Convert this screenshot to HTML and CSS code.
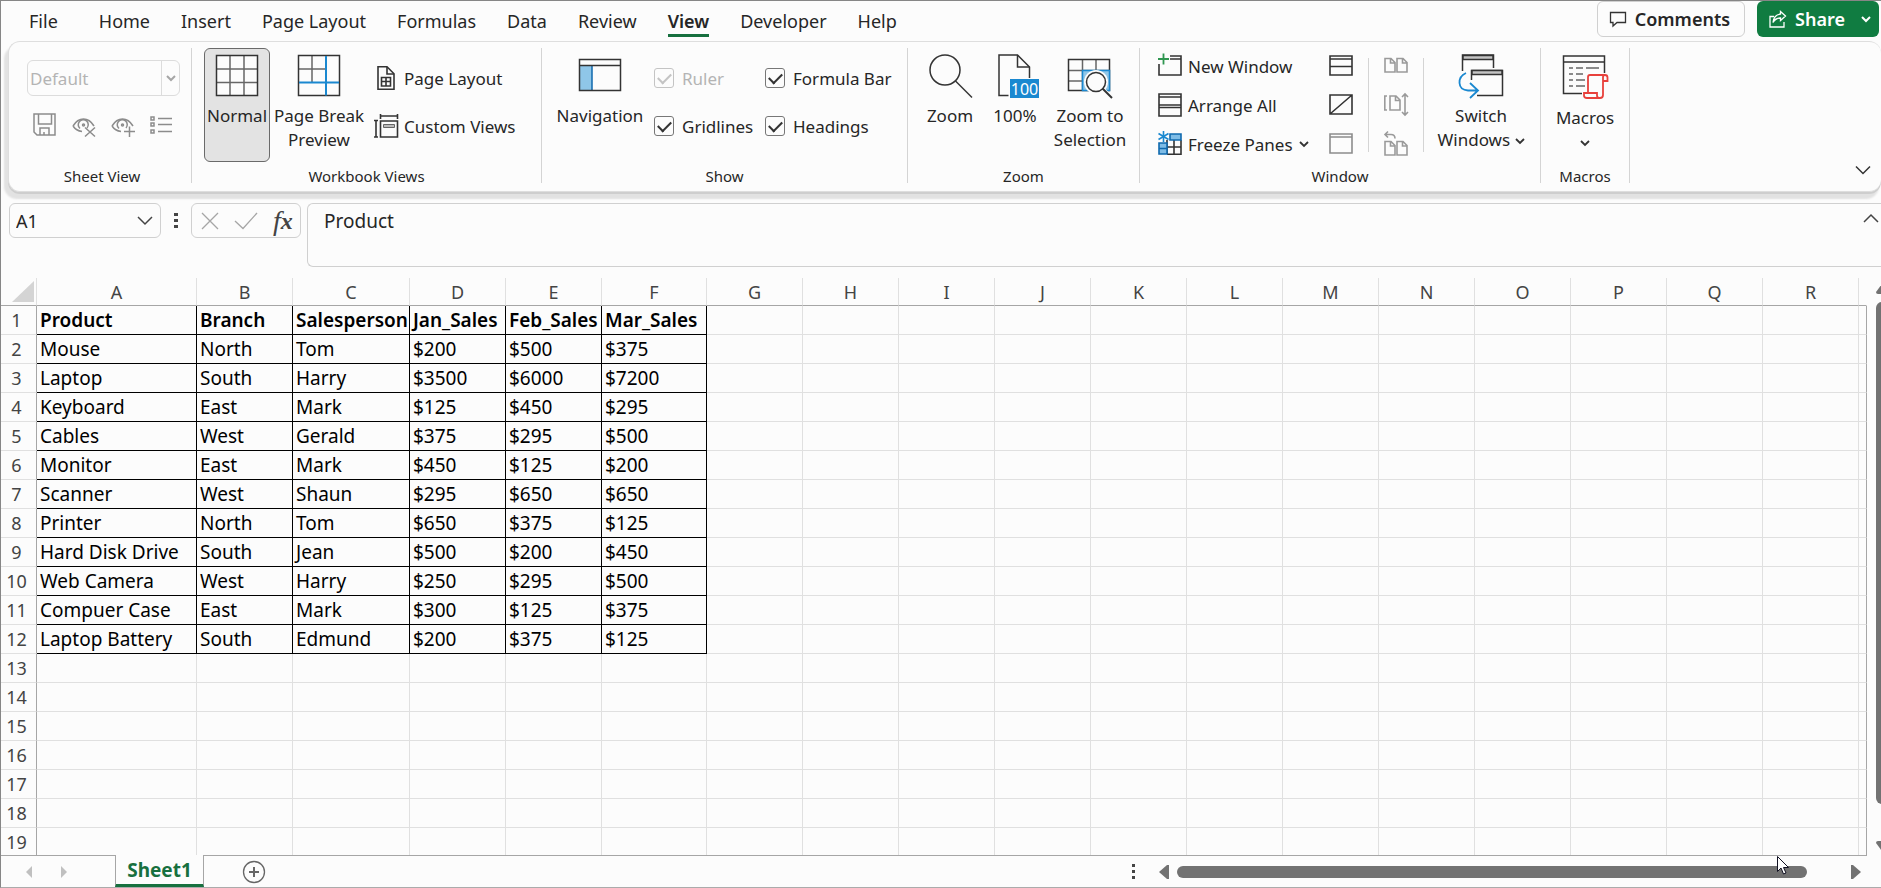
FILE: index.html
```html
<!DOCTYPE html>
<html lang="en">

<head>
    <meta charset="UTF-8">
    <meta name="viewport" content="width=device-width, initial-scale=1.0">
    <title>Sheet1</title>
    <link rel="stylesheet" href="styles.css">
</head>

<body>
    <header class="topbar">
        <nav class="tabs">
            <a href="#" class="tab file">File</a>
            <a href="#" class="tab">Home</a>
            <a href="#" class="tab">Insert</a>
            <a href="#" class="tab">Page Layout</a>
            <a href="#" class="tab">Formulas</a>
            <a href="#" class="tab">Data</a>
            <a href="#" class="tab">Review</a>
            <a href="#" class="tab active">View</a>
            <a href="#" class="tab">Developer</a>
            <a href="#" class="tab">Help</a>
        </nav>
        <div class="top-actions">
            <button class="comments">
                <svg width="18" height="18" viewBox="0 0 18 18"><path d="M1.5 2.5h15v10H8l-4 3.500v-3.500H1.500z" fill="none" stroke="#333" stroke-width="1.300"/></svg>
                Comments
            </button>
            <button class="share">
                <svg width="18" height="18" viewBox="0 0 18 18" fill="none" stroke="#fff" stroke-width="1.300"><path d="M5 6.500H1v10.500h14v-5"/><path d="M11.500 1.500l5 4.500-5 4.500V8C8 8 5.500 9.500 4 12.500 4.500 7.500 7 4.500 11.500 4z"/></svg>
                Share
                <svg class="share-arrow" width="10" height="8" viewBox="0 0 10 8"><path d="M1 2l4 4 4-4" fill="none" stroke="#fff" stroke-width="2"/></svg>
            </button>
        </div>
    </header>

    <section class="ribbon">
        <div class="group sheet-view">
            <div class="group-body stack">
                <div class="combo">
                    <select disabled aria-label="Sheet view"><option>Default</option></select>
                    <span class="combo-arrow"><svg width="10" height="8" viewBox="0 0 10 8"><path d="M1 2l4 4 4-4" fill="none" stroke="#a6a6a6" stroke-width="2"/></svg></span>
                </div>
                <div class="small-icons">
                    <button disabled aria-label="Keep"><svg width="24" height="24" viewBox="0 0 24 24" fill="none" stroke="#8c8c8c" stroke-width="1.500"><path d="M1 1h21v21H4l-3-3z"/><path d="M5.500 1v10h13V1M7 22v-7h9v7M11 19v3"/></svg></button>
                    <button disabled aria-label="Exit"><svg width="24" height="24" viewBox="0 0 24 24" fill="none" stroke="#8c8c8c" stroke-width="1.500"><path d="M1 13C4 8 8 6 11.500 6S19 8 22 13M1 13c2 3 5 5 9 5.500"/><path d="M15 15a5 5 0 1 0-7 .5"/><circle cx="11.500" cy="12" r="1"/><path d="M13 14.500l10 9M23 14.500l-10 9"/></svg></button>
                    <button disabled aria-label="New"><svg width="24" height="24" viewBox="0 0 24 24" fill="none" stroke="#8c8c8c" stroke-width="1.500"><path d="M1 13C4 8 8 6 11.500 6S19 8 22 13M1 13c2 3 5 5 9 5.500"/><path d="M15 15a5 5 0 1 0-7 .5"/><circle cx="11.500" cy="12" r="1"/><path d="M18.500 13.500v10.500M13 18.500h11"/></svg></button>
                    <button disabled aria-label="Options"><svg width="24" height="24" viewBox="0 0 24 24" fill="none" stroke="#8c8c8c" stroke-width="1.500"><path d="M1 4h3v3H1zM1 10h3v3H1zM1 17h3v3H1zM8 5.500h14M8 11.500h14M8 18.500h14"/></svg></button>
                </div>
            </div>
            <div class="group-label">Sheet View</div>
        </div>

        <div class="group workbook-views">
            <div class="group-body">
                <button class="big pressed">
                    <svg width="44" height="44" viewBox="0 0 44 44" fill="none" stroke="#666"><rect x="1.500" y="1.500" width="41" height="40" fill="#fcfcfc"/><path d="M15 1v41M29 1v41M1 15h41M1 28.500h41" stroke-width="1.500"/><rect x="1.500" y="1.500" width="41" height="40" stroke="#333" stroke-width="1.500"/></svg>
                    <span>Normal</span>
                </button>
                <button class="big page-break">
                    <svg width="44" height="44" viewBox="0 0 44 44" fill="none" stroke="#666" stroke-width="1.500"><path d="M15 1v27M1 15h27"/><rect x="1.500" y="1.500" width="41" height="40" stroke="#333"/><path d="M29 2v39.500M2 28.500h40" stroke="#1a88d0" stroke-width="2"/></svg>
                    <span>Page Break<br>Preview</span>
                </button>
                <div class="rows two">
                    <button class="row"><svg width="26" height="24" viewBox="0 0 26 24" fill="none" stroke="#333" stroke-width="1.600"><path d="M5 .8h9l7 7v15.400H5z"/><path d="M14 1v7h7"/><path d="M8.500 11.500h9v8.500h-9zM13 11.500V20M8.500 15.500h9"/></svg>Page Layout</button>
                    <button class="row"><svg width="26" height="24" viewBox="0 0 26 24" fill="none" stroke="#333" stroke-width="1.600"><path d="M7.500 2h17M7.500 0v5M24.500 0v5M3 6.500V23M1 6.500h4M1 23h4"/><path d="M7.500 7h17v16h-17z"/><path d="M10.500 10.500h11v3h-11z" fill="#bbb" stroke="#666" stroke-width="1"/></svg>Custom Views</button>
                </div>
            </div>
            <div class="group-label">Workbook Views</div>
        </div>

        <div class="group show">
            <div class="group-body">
                <button class="big">
                    <svg width="44" height="44" viewBox="0 0 44 44"><rect x="2" y="12" width="12" height="25" fill="#8fc6e8"/><path d="M14 12v25" stroke="#0f69ae" stroke-width="1.500"/><path d="M1.500 5.500h41v31h-41zM1.500 11.500h41" fill="none" stroke="#333" stroke-width="1.500"/></svg>
                    <span>Navigation</span>
                </button>
                <div class="checks">
                    <label class="check off"><input type="checkbox" checked disabled>Ruler</label>
                    <label class="check"><input type="checkbox" checked>Formula Bar</label>
                    <label class="check"><input type="checkbox" checked>Gridlines</label>
                    <label class="check"><input type="checkbox" checked>Headings</label>
                </div>
            </div>
            <div class="group-label">Show</div>
        </div>

        <div class="group zoom">
            <div class="group-body">
                <button class="big">
                    <svg width="44" height="44" viewBox="0 0 44 44" fill="none" stroke="#333" stroke-width="1.500"><circle cx="17" cy="16" r="15"/><path d="M27.500 27L44 43.500"/></svg>
                    <span>Zoom</span>
                </button>
                <button class="big">
                    <svg width="44" height="44" viewBox="0 0 44 44" fill="none" stroke="#333" stroke-width="1.500"><path d="M15.500 41.500H6V1h18.500l12 12v11"/><path d="M24.500 1v12h12"/><rect x="17" y="25" width="29" height="19" fill="#1a88d0" stroke="none"/><text x="31.500" y="40.500" class="badge-text">100</text></svg>
                    <span>100%</span>
                </button>
                <button class="big wide">
                    <svg width="46" height="44" viewBox="0 0 46 44" fill="none" stroke="#666" stroke-width="1.500"><path d="M15.500 5v32M29 5v12M1.500 16.500h41M1.500 27h14"/><path d="M1.500 5.500h41v31h-41z" stroke="#333"/><path d="M15.500 16.500h27v20h-27z" fill="#8fc6e8" stroke="#1a88d0"/><circle cx="29" cy="28" r="12" fill="#fcfcfc" stroke="none"/><path d="M34 34l11 11" stroke="#fcfcfc" stroke-width="5"/><circle cx="29" cy="28" r="9.500" stroke="#333"/><path d="M35.500 34.500L45 44" stroke="#333" stroke-width="2"/></svg>
                    <span>Zoom to<br>Selection</span>
                </button>
            </div>
            <div class="group-label">Zoom</div>
        </div>

        <div class="group window">
            <div class="group-body">
                <div class="rows three window-list">
                    <button class="row"><svg width="24" height="24" viewBox="0 0 24 24" fill="none" stroke="#333" stroke-width="1.600"><path d="M12 2h11v19H1V10M12 5h11"/><path d="M5.500-.5v11M0 5h11" stroke="#2f9650" stroke-width="1.800"/></svg>New Window</button>
                    <button class="row"><svg width="24" height="24" viewBox="0 0 24 24" fill="none" stroke="#333" stroke-width="1.600"><path d="M1 1h22v22H1zM1 4h22M1 12h22M1 14.500h22"/></svg>Arrange All</button>
                    <button class="row"><svg width="24" height="24" viewBox="0 0 24 24" fill="none" stroke="#333" stroke-width="1.600"><path d="M9 8v14M16 8v14M9 15h14M9 22.200h14V8"/><path d="M12 2h11v6H12zM1 11h8v11H1zM1 16.500h8" fill="#7ebce6" stroke="#0f69ae"/><path d="M5.500-1v11M.5 1.500l10 6M10.500 1.500l-10 6" stroke="#1a88d0" stroke-width="1.600"/></svg>Freeze Panes<svg class="caret" width="10" height="8" viewBox="0 0 10 8"><path d="M1 2l4 4 4-4" fill="none" stroke="#333" stroke-width="1.800"/></svg></button>
                </div>
                <div class="rows three">
                    <button class="row" aria-label="Split"><svg width="24" height="24" viewBox="0 0 24 24" fill="none" stroke="#333" stroke-width="1.600"><path d="M1 2h22v19H1zM1 5h22M1 12.500h22"/></svg></button>
                    <button class="row" aria-label="Hide"><svg width="24" height="24" viewBox="0 0 24 24" fill="none" stroke="#333" stroke-width="1.600"><path d="M1 2h22v19H1zM1 21L23 2"/></svg></button>
                    <button class="row" disabled aria-label="Unhide"><svg width="24" height="24" viewBox="0 0 24 24" fill="none" stroke="#8c8c8c" stroke-width="1.600"><path d="M1 2h22v19H1zM1 5h22"/></svg></button>
                </div>
                <div class="divider"></div>
                <div class="rows three">
                    <button class="row" disabled aria-label="View Side by Side"><svg width="24" height="24" viewBox="0 0 24 24" fill="none" stroke="#9a9a9a" stroke-width="1.600"><path d="M1 4.500h6l4 4V18H1zM6.500 4.500v4.500h4.500M13 4.500h6l4 4V18H13zM18.500 4.500v4.500H23"/></svg></button>
                    <button class="row" disabled aria-label="Synchronous Scrolling"><svg width="24" height="24" viewBox="0 0 24 24" fill="none" stroke="#9a9a9a" stroke-width="1.600"><path d="M3 3H.8v14H3M6 3h6l4 4v10H6zM11.500 3v4.500H16M21 1v21M18 4l3-3 3 3M18 19l3 3 3-3"/></svg></button>
                    <button class="row" disabled aria-label="Reset Window Position"><svg width="24" height="24" viewBox="0 0 24 24" fill="none" stroke="#9a9a9a" stroke-width="1.600"><path d="M1 9.500h6l4 4V23H1zM6.500 9.500V14H11M13 9.500h6l4 4V23H13zM18.500 9.500V14H23M4-.5L1 2.500l3 3M1 2.500h6c3 0 4 1.500 4 4"/></svg></button>
                </div>
                <div class="divider narrow"></div>
                <button class="big switch">
                    <svg width="46" height="44" viewBox="0 0 46 44" fill="none" stroke="#333" stroke-width="1.500"><path d="M4.500 17V1h31v13" /><path d="M5 1.500h30v4H5z" fill="#c4c4c4"/><path d="M13.500 26V16.500h31v25H19"/><path d="M14 16.500h30v4H14z" fill="#c4c4c4"/><path d="M8 19C-1 23-1 36 10 36.500h10M12 29l8 7.500-8 7.500" stroke="#1a88d0" stroke-width="1.800"/></svg>
                    <span>Switch<br>Windows <svg class="caret" width="10" height="8" viewBox="0 0 10 8"><path d="M1 2l4 4 4-4" fill="none" stroke="#333" stroke-width="1.800"/></svg></span>
                </button>
            </div>
            <div class="group-label">Window</div>
        </div>

        <div class="group macros">
            <div class="group-body">
                <button class="big">
                    <svg width="46" height="46" viewBox="0 0 46 46" fill="none" stroke="#333" stroke-width="1.500"><path d="M20 39.500H1.500V2h41v17M1.500 8h41"/><path d="M7 14h4M14 14h7M24 14h13M7 20h4M14 20h7M7 26h4M14 26h9M7 32h4M14 32h9" stroke="#666"/><path d="M26 39V23c0-1.500 1-2 2-2h15c2 0 2.500 1 2.500 2.500V27H41v14c0 2-1 3-3 3H25c-2 0-3-1-3-2.500V39h13v2.500c0 1.500 1 2.500 2.500 2.500M41 27v-4c0-1 .5-2 2-2" stroke="#e8413c" stroke-width="1.800"/></svg>
                    <span>Macros<br><svg class="caret" width="10" height="8" viewBox="0 0 10 8"><path d="M1 2l4 4 4-4" fill="none" stroke="#333" stroke-width="1.800"/></svg></span>
                </button>
            </div>
            <div class="group-label">Macros</div>
        </div>
        <button class="collapse" aria-label="Collapse ribbon"><svg width="16" height="10" viewBox="0 0 16 10"><path d="M1 1.500l7 7 7-7" fill="none" stroke="#333" stroke-width="1.500"/></svg></button>
    </section>

    <section class="formula-bar">
        <div class="name-box">
            <input type="text" value="A1" aria-label="Name box">
            <svg width="16" height="10" viewBox="0 0 16 10"><path d="M1 1l7 7 7-7" fill="none" stroke="#444" stroke-width="1.500"/></svg>
        </div>
        <svg class="dots" width="4" height="16" viewBox="0 0 4 16"><path d="M0 0h4v3H0zM0 6h4v3H0zM0 12h4v3H0z" fill="#444"/></svg>
        <div class="fx-box">
            <button aria-label="Cancel"><svg width="18" height="18" viewBox="0 0 18 18"><path d="M1 1l16 16M17 1L1 17" stroke="#a6a6a6" stroke-width="1.300"/></svg></button>
            <button aria-label="Enter"><svg width="24" height="18" viewBox="0 0 24 18"><path d="M1 9l8 7.500L23 1" fill="none" stroke="#a6a6a6" stroke-width="1.300"/></svg></button>
            <button class="fx" aria-label="Insert function"><i>f</i>x</button>
        </div>
        <div class="formula">
            <textarea aria-label="Formula">Product</textarea>
            <svg width="16" height="10" viewBox="0 0 16 10"><path d="M1 9l7-7 7 7" fill="none" stroke="#444" stroke-width="1.500"/></svg>
        </div>
    </section>

    <main class="sheet">
        <div class="sheet-view-area">
            <table id="grid">
                <colgroup>
                    <col class="c-head"><col class="c-a"><col class="c-std"><col class="c-c"><col class="c-std"><col class="c-std"><col class="c-f">
                    <col class="c-std" span="12">
                    <col>
                </colgroup>
            </table>
        </div>
        <div class="v-scroll">
            <svg width="12" height="10" viewBox="0 0 12 10"><path d="M6 0l6 8q0 2-2 2H2q-2 0-2-2z" fill="#727272"/></svg>
            <div class="v-thumb"></div>
            <svg width="12" height="10" viewBox="0 0 12 10"><path d="M6 10l6-8q0-2-2-2H2Q0 0 0 2z" fill="#727272"/></svg>
        </div>
    </main>

    <footer class="bottom">
        <div class="sheet-nav">
            <svg width="6" height="12" viewBox="0 0 6 12"><path d="M6 0v12L0 6z" fill="#c0c0c0"/></svg>
            <svg width="6" height="12" viewBox="0 0 6 12"><path d="M0 0v12l6-6z" fill="#c0c0c0"/></svg>
        </div>
        <button class="sheet-tab">Sheet1</button>
        <div class="bottom-rest">
            <button class="add" aria-label="New sheet"><svg width="24" height="24" viewBox="0 0 24 24" fill="none" stroke="#666"><circle cx="12" cy="12" r="10.500" stroke-width="1.300"/><path d="M12 7v10M7 12h10" stroke-width="2"/></svg></button>
            <div class="h-scroll">
                <svg class="grip" width="3" height="16" viewBox="0 0 3 16"><path d="M0 0h3v3H0zM0 6h3v3H0zM0 12h3v3H0z" fill="#444"/></svg>
                <svg width="10" height="14" viewBox="0 0 10 14"><path d="M0 7l8-7h2v14H8z" fill="#727272"/></svg>
                <div class="h-thumb"></div>
                <svg width="10" height="14" viewBox="0 0 10 14"><path d="M10 7L2 0H0v14h2z" fill="#727272"/></svg>
            </div>
        </div>
    </footer>

    <svg class="pointer" width="12" height="19" viewBox="0 0 12 19"><path d="M.5.5v15l3.500-3.500 2.500 6 2.500-1-2.500-5.500h5z" fill="#fff" stroke="#112"/></svg>

    <script src="script.js"></script>
</body>

</html>
```
FILE: styles.css
```css
* {
    box-sizing: border-box;
}

body {
    font-family: "Noto Sans", "Open Sans", sans-serif;
    margin: 0;
    height: 100vh;
    display: flex;
    flex-direction: column;
    overflow: hidden;
    background: #fcfcfc;
    color: #262626;
    border: 1px solid #868686;
    border-right: 0;
    border-bottom-color: #ababab;
}

button, input, select, textarea {
    font: inherit;
    color: inherit;
    background: none;
    border: 0;
    padding: 0;
    margin: 0;
}

button {
    display: flex;
    align-items: center;
    white-space: nowrap;
}

svg {
    display: block;
    flex: none;
    overflow: visible;
}

/* top tabs */
.topbar {
    display: flex;
    justify-content: space-between;
    height: 40px;
    flex: none;
    font-size: 18px;
}

.tabs {
    display: flex;
    gap: 31px;
    padding-left: 28px;
}

.tab {
    margin-top: 6px;
    height: 30px;
    line-height: 28px;
    color: inherit;
    text-decoration: none;
    white-space: nowrap;
}

.tab.file {
    margin-right: 10px;
}

.tab.active {
    font-weight: 600;
    border-bottom: 3px solid #17703f;
}

.top-actions {
    display: flex;
    gap: 12px;
    padding-right: 2px;
    font-weight: 600;
}

.comments, .share {
    height: 36px;
    gap: 8px;
    border-radius: 6px;
}

.comments {
    border: 1px solid #d0d0d0;
    padding: 0 14px 0 11px;
}

.share {
    background: #107c41;
    color: #fff;
    padding: 0 8px 0 12px;
}

.share-arrow {
    margin-left: 8px;
}

/* ribbon */
.ribbon {
    display: flex;
    flex: none;
    height: 151px;
    margin-left: 7px;
    padding: 6px 0 8px;
    border: 1px solid #dedede;
    border-right: 0;
    border-radius: 12px;
    box-shadow: 0 2px 0 #cecece, -3px 6px 2px 1px #e2e2e2;
    background: #fcfcfc;
    font-size: 17px;
}

.group {
    display: flex;
    flex-direction: column;
    flex: none;
    border-right: 1px solid #d4d4d4;
}

.group-body {
    flex: 1;
    display: flex;
    align-items: flex-start;
}

.group-label {
    font-size: 15px;
    line-height: 14px;
    text-align: center;
}

.sheet-view { width: 183px; padding-left: 18px; }
.workbook-views { width: 350px; }
.show { width: 366px; }
.zoom { width: 232px; }
.window { width: 401px; }
.macros { width: 89px; }

.sheet-view .group-label { padding-right: 14px; }
.workbook-views .group-body { padding-left: 12px; }
.show .group-body { padding-left: 13px; }
.zoom .group-body { padding-left: 12px; gap: 5px; }
.window .group-body { padding-left: 18px; }
.macros .group-body { justify-content: center; }

.stack {
    flex-direction: column;
    padding-top: 12px;
    gap: 17px;
}

.combo {
    display: flex;
    width: 153px;
    height: 36px;
    border: 1px solid #dcdcdc;
    border-radius: 6px;
    position: relative;
}

.combo select {
    appearance: none;
    flex: 1;
    padding-left: 2px;
    color: #b4b4b4;
    opacity: 1;
}

.combo-arrow {
    position: absolute;
    right: 0;
    top: 0;
    width: 18px;
    height: 34px;
    display: flex;
    align-items: center;
    justify-content: center;
    border-left: 1px solid #dcdcdc;
}

.small-icons {
    display: flex;
    gap: 15px;
    padding-left: 6px;
}

.big {
    flex-direction: column;
    gap: 6px;
    width: 90px;
    height: 114px;
    padding-top: 5px;
    border: 1px solid transparent;
    line-height: 24px;
    text-align: center;
}

.big.pressed {
    width: 66px;
    background: #e3e3e3;
    border-color: #6a6a6a;
    border-radius: 6px;
}

.big.page-break {
    margin: 0 9px 0 4px;
}

.zoom .big { width: 60px; }
.zoom .big.wide { width: 80px; }
.macros .big { width: 80px; }
.big.switch { width: 106px; }

.badge-text {
    font-size: 16px;
    fill: #fff;
    stroke: none;
    text-anchor: middle;
}

.rows {
    display: flex;
    flex-direction: column;
}

.rows.two {
    padding-top: 18px;
    gap: 24px;
}

.rows.three {
    padding-top: 6px;
    gap: 15px;
}

.row {
    height: 24px;
    gap: 6px;
}

.rows.two .row {
    gap: 5px;
}

.window-list {
    width: 171px;
}

.caret {
    display: inline-block;
    vertical-align: middle;
}

.divider {
    width: 1px;
    height: 94px;
    margin: 10px 15px 0;
    background: #d4d4d4;
}

.divider.narrow {
    margin-right: 4px;
}

.checks {
    display: grid;
    grid-template-columns: 111px auto;
    gap: 24px 0;
    padding: 18px 0 0 9px;
}

.check {
    display: flex;
    align-items: center;
    gap: 8px;
    height: 24px;
    white-space: nowrap;
}

.check input {
    appearance: none;
    width: 20px;
    height: 20px;
    border: 1px solid #777;
    border-radius: 3px;
    display: grid;
    place-items: center;
}

.check input::before {
    content: "";
    width: 11px;
    height: 6px;
    margin-bottom: 3px;
    border-left: 2px solid #333;
    border-bottom: 2px solid #333;
    transform: rotate(-45deg);
}

.check.off {
    color: #b4b4b4;
}

.check.off input,
.check.off input::before {
    border-color: #c4c4c4;
}

.collapse {
    margin-left: auto;
    margin-right: 10px;
    align-items: flex-end;
    padding-bottom: 8px;
}

/* formula bar */
.formula-bar {
    display: flex;
    align-items: flex-start;
    flex: none;
    padding: 11px 0 11px 8px;
    font-size: 19px;
}

.name-box {
    display: flex;
    align-items: center;
    width: 152px;
    height: 35px;
    padding: 0 7px 0 6px;
    border: 1px solid #d0d0d0;
    border-radius: 6px;
    font-size: 18px;
}

.name-box input {
    flex: 1;
    min-width: 0;
}

.dots {
    margin: 10px 13px 0;
}

.fx-box {
    display: flex;
    align-items: center;
    gap: 15px;
    width: 110px;
    height: 35px;
    padding-left: 9px;
    border: 1px solid #d0d0d0;
    border-radius: 6px;
}

.fx {
    font: italic bold 24px/32px "Liberation Serif", serif;
    color: #444;
}

.fx i {
    font-size: 28px;
    font-weight: 400;
}

.formula {
    display: flex;
    flex: 1;
    height: 64px;
    margin-left: 6px;
    padding: 3px 2px 0 16px;
    border: 1px solid #d0d0d0;
    border-right: 0;
    border-radius: 6px 0 0 6px;
}

.formula textarea {
    flex: 1;
    resize: none;
    line-height: 28px;
}

.formula svg {
    margin-top: 6px;
}

/* sheet */
.sheet {
    flex: 1;
    min-height: 0;
    display: flex;
}

.sheet-view-area {
    flex: 1;
    min-width: 0;
    overflow: hidden;
    border-bottom: 1px solid #a6a6a6;
}

#grid {
    width: 100%;
    table-layout: fixed;
    border-collapse: separate;
    border-spacing: 0;
    font-size: 19px;
    color: #000;
}

.c-head { width: 36px; }
.c-a { width: 160px; }
.c-std { width: 96px; }
.c-c { width: 117px; }
.c-f { width: 105px; }

#grid th, #grid td {
    height: 29px;
    padding: 0 0 0 3px;
    line-height: 28px;
    text-align: left;
    white-space: nowrap;
    overflow: hidden;
    border-right: 1px solid #e0e0e0;
    border-bottom: 1px solid #e0e0e0;
}

#grid thead th {
    height: 28px;
    line-height: 25px;
    padding: 2px 0 0;
    text-align: center;
    font-size: 18px;
    font-weight: 400;
    color: #444;
    border-bottom-color: #a6a6a6;
}

#grid thead th:last-child {
    border-right-color: transparent;
}

#grid tbody th {
    padding: 0 4px 0 0;
    text-align: center;
    font-size: 18px;
    font-weight: 400;
    color: #444;
    border-right-color: #a6a6a6;
}

#grid tbody td:last-child {
    border-right-color: #a6a6a6;
}

#grid td.data {
    border-color: #000;
}

#grid td.title {
    font-weight: 600;
}

#grid .corner {
    padding: 3px 3px 3px 11px;
}

.v-scroll {
    width: 14px;
    padding: 6px 0 5px 9px;
    overflow: hidden;
    display: flex;
    flex-direction: column;
    gap: 8px;
}

.v-thumb {
    flex: 1;
    width: 12px;
    margin-bottom: 29px;
    border-radius: 6px;
    background: #727272;
}

/* bottom bar */
.bottom {
    display: flex;
    flex: none;
    height: 31px;
}

.sheet-nav {
    display: flex;
    align-items: center;
    gap: 29px;
    width: 114px;
    padding-left: 25px;
}

.sheet-tab {
    justify-content: center;
    width: 89px;
    margin-top: -1px;
    background: #fcfcfc;
    border: 1px solid #a6a6a6;
    border-top: 0;
    border-bottom: 3px solid #17703f;
    font-size: 19px;
    font-weight: 700;
    line-height: 26px;
    color: #17703f;
}

.bottom-rest {
    flex: 1;
    display: flex;
    align-items: center;
    justify-content: space-between;
    padding: 0 20px 0 38px;
}

.h-scroll {
    display: flex;
    align-items: center;
    width: 45%;
}

.grip {
    margin-right: 24px;
}

.h-thumb {
    flex: 1;
    height: 12px;
    margin: 0 44px 0 8px;
    border-radius: 6px;
    background: #727272;
}

.pointer {
    position: absolute;
    left: 1777px;
    top: 856px;
}
```
FILE: script.js
```js
const rows = [
    ["Product", "Branch", "Salesperson", "Jan_Sales", "Feb_Sales", "Mar_Sales"],
    ["Mouse", "North", "Tom", "$200", "$500", "$375"],
    ["Laptop", "South", "Harry", "$3500", "$6000", "$7200"],
    ["Keyboard", "East", "Mark", "$125", "$450", "$295"],
    ["Cables", "West", "Gerald", "$375", "$295", "$500"],
    ["Monitor", "East", "Mark", "$450", "$125", "$200"],
    ["Scanner", "West", "Shaun", "$295", "$650", "$650"],
    ["Printer", "North", "Tom", "$650", "$375", "$125"],
    ["Hard Disk Drive", "South", "Jean", "$500", "$200", "$450"],
    ["Web Camera", "West", "Harry", "$250", "$295", "$500"],
    ["Compuer Case", "East", "Mark", "$300", "$125", "$375"],
    ["Laptop Battery", "South", "Edmund", "$200", "$375", "$125"]
];
const letters = "ABCDEFGHIJKLMNOPQR".split("");
const rowCount = 19;

const grid = document.getElementById("grid");

// column letters
const headRow = grid.createTHead().insertRow();
const corner = document.createElement("th");
corner.className = "corner";
corner.innerHTML = '<svg width="22" height="21" viewBox="0 0 22 21"><path d="M22 0v21H0z" fill="#d4d4d4"/></svg>';
headRow.appendChild(corner);
letters.concat("").forEach(letter => {
    const th = document.createElement("th");
    th.textContent = letter;
    headRow.appendChild(th);
});

// cells
const body = grid.createTBody();
for (let r = 0; r < rowCount; r++) {
    const tr = body.insertRow();
    const th = document.createElement("th");
    th.textContent = r + 1;
    tr.appendChild(th);
    for (let c = 0; c <= letters.length; c++) {
        const td = tr.insertCell();
        if (rows[r] && rows[r][c]) {
            td.textContent = rows[r][c];
            td.classList.add("data");
            if (r === 0) td.classList.add("title");
        }
    }
}
```
